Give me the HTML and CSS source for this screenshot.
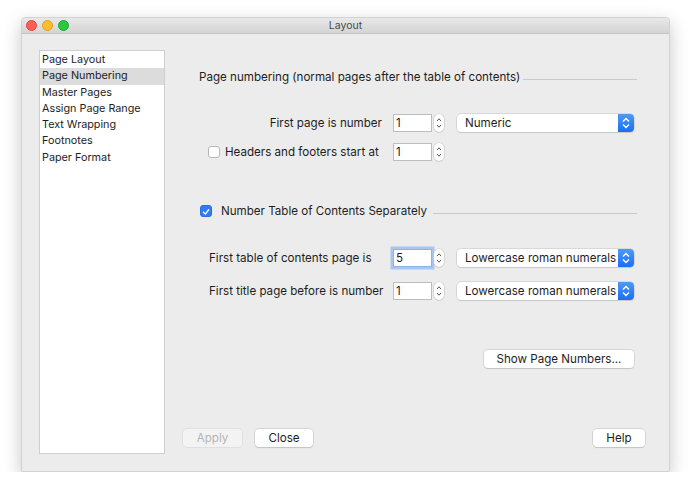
FILE: index.html
```html
<!DOCTYPE html>
<html lang="en">
<head>
  <meta charset="UTF-8">
  <title>Layout</title>
  <link rel="stylesheet" href="styles.css">
</head>
<body>
  <div class="window">
    <div class="titlebar">
      <div class="lights">
        <span class="light red"></span>
        <span class="light yellow"></span>
        <span class="light green"></span>
      </div>
      <div class="title">Layout</div>
    </div>

    <div class="content">
      <ul class="sidebar">
        <li>Page Layout</li>
        <li class="selected">Page Numbering</li>
        <li>Master Pages</li>
        <li>Assign Page Range</li>
        <li>Text Wrapping</li>
        <li>Footnotes</li>
        <li>Paper Format</li>
      </ul>

      <div class="main">
        <div class="group-title">
          <span>Page numbering (normal pages after the table of contents)</span>
          <span class="rule"></span>
        </div>

        <div class="row row-first">
          <label class="label right">First page is number</label>
          <div class="field">1</div>
          <span class="stepper"><svg viewBox="0 0 10 18" width="10" height="18"><path d="M3 7 L5 4.8 L7 7 M3 11 L5 13.2 L7 11" fill="none" stroke="#555" stroke-width="1"/></svg></span>
          <div class="select">
            <span class="select-text">Numeric</span>
            <span class="select-arrow"><svg viewBox="0 0 16 18" width="16" height="18"><path d="M5 7.5 L8 4.5 L11 7.5 M5 10.5 L8 13.5 L11 10.5" fill="none" stroke="#fff" stroke-width="1.4"/></svg></span>
          </div>
        </div>

        <div class="row">
          <label class="label check-label"><span class="checkbox"></span>Headers and footers start at</label>
          <div class="field">1</div>
          <span class="stepper"><svg viewBox="0 0 10 18" width="10" height="18"><path d="M3 7 L5 4.8 L7 7 M3 11 L5 13.2 L7 11" fill="none" stroke="#555" stroke-width="1"/></svg></span>
        </div>

        <div class="group-title group-two">
          <span class="checkbox checked"><svg viewBox="0 0 12 12" width="12" height="12"><path d="M3 6.3 L5.2 8.5 L9.2 3.3" fill="none" stroke="#fff" stroke-width="1.6" stroke-linecap="round" stroke-linejoin="round"/></svg></span>
          <span class="group-text">Number Table of Contents Separately</span>
          <span class="rule"></span>
        </div>

        <div class="row row-toc">
          <label class="label indent">First table of contents page is</label>
          <div class="field focused">5</div>
          <span class="stepper"><svg viewBox="0 0 10 18" width="10" height="18"><path d="M3 7 L5 4.8 L7 7 M3 11 L5 13.2 L7 11" fill="none" stroke="#555" stroke-width="1"/></svg></span>
          <div class="select">
            <span class="select-text">Lowercase roman numerals</span>
            <span class="select-arrow"><svg viewBox="0 0 16 18" width="16" height="18"><path d="M5 7.5 L8 4.5 L11 7.5 M5 10.5 L8 13.5 L11 10.5" fill="none" stroke="#fff" stroke-width="1.4"/></svg></span>
          </div>
        </div>

        <div class="row row-title">
          <label class="label indent">First title page before is number</label>
          <div class="field">1</div>
          <span class="stepper"><svg viewBox="0 0 10 18" width="10" height="18"><path d="M3 7 L5 4.8 L7 7 M3 11 L5 13.2 L7 11" fill="none" stroke="#555" stroke-width="1"/></svg></span>
          <div class="select">
            <span class="select-text">Lowercase roman numerals</span>
            <span class="select-arrow"><svg viewBox="0 0 16 18" width="16" height="18"><path d="M5 7.5 L8 4.5 L11 7.5 M5 10.5 L8 13.5 L11 10.5" fill="none" stroke="#fff" stroke-width="1.4"/></svg></span>
          </div>
        </div>

        <div class="show-row">
          <button class="btn btn-show">Show Page Numbers...</button>
        </div>

        <div class="footer">
          <button class="btn btn-apply" disabled>Apply</button>
          <button class="btn btn-close">Close</button>
          <span class="spacer"></span>
          <button class="btn btn-help">Help</button>
        </div>
      </div>
    </div>
  </div>
</body>
</html>
```

FILE: styles.css
```css
* {
  box-sizing: border-box;
  margin: 0;
  padding: 0;
}

body {
  background: #ffffff;
  font-family: 'Inter', 'Liberation Sans', sans-serif;
  font-size: 11.6px;
  color: #1e1e1e;
  padding: 17px 0 0 21px;
}

.window {
  width: 649px;
  height: 455px;
  background: #ececec;
  border: 1px solid #d2d2d2;
  border-radius: 4px 4px 2px 2px;
  box-shadow: 0 6px 18px rgba(0, 0, 0, 0.22);
  display: flex;
  flex-direction: column;
}

.titlebar {
  height: 16px;
  background: linear-gradient(#e8e8e8, #d4d4d4);
  border-bottom: 1px solid #c4c4c4;
  border-radius: 4px 4px 0 0;
  position: relative;
  display: flex;
  align-items: center;
  justify-content: center;
}

.lights {
  position: absolute;
  left: 4px;
  top: 2px;
  display: flex;
  gap: 5px;
}

.light {
  width: 11px;
  height: 11px;
  border-radius: 50%;
}

.light.red { background: #fc5f57; border: 0.5px solid #e0443e; }
.light.yellow { background: #fdbc2e; border: 0.5px solid #dea123; }
.light.green { background: #29c840; border: 0.5px solid #1aab29; }

.title {
  font-size: 10.5px;
  color: #4a4a4a;
}

.content {
  flex: 1;
  display: flex;
  padding: 16px 24px 17px 17px;
}

.sidebar {
  list-style: none;
  width: 126px;
  background: #ffffff;
  border: 1px solid #cfcfcf;
  padding-top: 1px;
}

.sidebar li {
  height: 16.3px;
  line-height: 16px;
  padding-left: 2px;
  font-size: 10.8px;
}

.sidebar li.selected {
  background: #dcdcdc;
}

.main {
  flex: 1;
  display: flex;
  flex-direction: column;
  padding-left: 18px;
}

.group-title {
  display: flex;
  align-items: center;
  margin: 20px 8px 0 16px;
  white-space: nowrap;
}

.rule {
  flex: 1;
  height: 1px;
  background: #c9c9c9;
  margin: 4px 0 0 3px;
}

.row {
  display: flex;
  align-items: center;
  height: 18px;
  margin-top: 11px;
}

.row-first {
  margin-top: 30px;
}

.label {
  width: 210px;
  white-space: nowrap;
}

.label.right {
  text-align: right;
  padding-right: 11px;
}

.label.check-label {
  display: flex;
  align-items: center;
  padding-left: 25px;
}

.label.indent {
  padding-left: 26px;
}

.checkbox {
  width: 12px;
  height: 12px;
  background: #ffffff;
  border: 1px solid #b8b8b8;
  border-radius: 3px;
  margin-right: 5px;
  display: inline-flex;
  flex-shrink: 0;
}

.checkbox.checked {
  background: #2f7cf6;
  border-color: #2a6fe0;
  margin-right: 9px;
}

.field {
  width: 39px;
  height: 18px;
  background: #ffffff;
  border: 1px solid #bdbdbd;
  padding-left: 2px;
  line-height: 16px;
}

.field.focused {
  border-color: #8db2ea;
  box-shadow: 0 0 0 2.5px #a9c5f2;
}

.stepper {
  width: 10px;
  height: 18px;
  margin-left: 2px;
  background: #ffffff;
  border-radius: 5px;
  box-shadow: 0 0 0 0.5px #c2c2c2, 0 0.5px 1px rgba(0, 0, 0, 0.15);
  display: flex;
}

.select {
  width: 177px;
  height: 18px;
  margin-left: 13px;
  background: #ffffff;
  border-radius: 4px;
  box-shadow: 0 0 0 0.5px #c4c4c4, 0 1px 1px rgba(0, 0, 0, 0.12);
  display: flex;
  align-items: center;
  overflow: hidden;
}

.select-text {
  flex: 1;
  padding-left: 8px;
  white-space: nowrap;
}

.select-arrow {
  width: 16px;
  height: 18px;
  background: linear-gradient(#4d9bf8, #1a6ef2);
  display: flex;
}

.group-two {
  margin-top: 43px;
  margin-left: 17px;
}

.group-two .rule {
  margin-left: 6px;
}

.row-toc {
  margin-top: 31px;
}

.row-title {
  margin-top: 15px;
}

.show-row {
  display: flex;
  justify-content: flex-end;
  margin-top: 50px;
  padding-right: 11px;
}

.btn {
  height: 18px;
  font-family: inherit;
  font-size: 11.6px;
  color: #1e1e1e;
  background: #ffffff;
  border: none;
  border-radius: 4px;
  box-shadow: 0 0 0 0.5px #c0c0c0, 0 1px 1px rgba(0, 0, 0, 0.15);
}

.btn-show {
  width: 150px;
}

.footer {
  margin-top: auto;
  margin-bottom: 7px;
  display: flex;
  align-items: center;
}

.btn-apply {
  width: 59px;
  background: #f3f3f3;
  color: #b5b5b5;
  box-shadow: 0 0 0 0.5px #d4d4d4;
}

.btn-close {
  width: 58px;
  margin-left: 13px;
}

.spacer {
  flex: 1;
}

.btn-help {
  width: 52px;
}
```
